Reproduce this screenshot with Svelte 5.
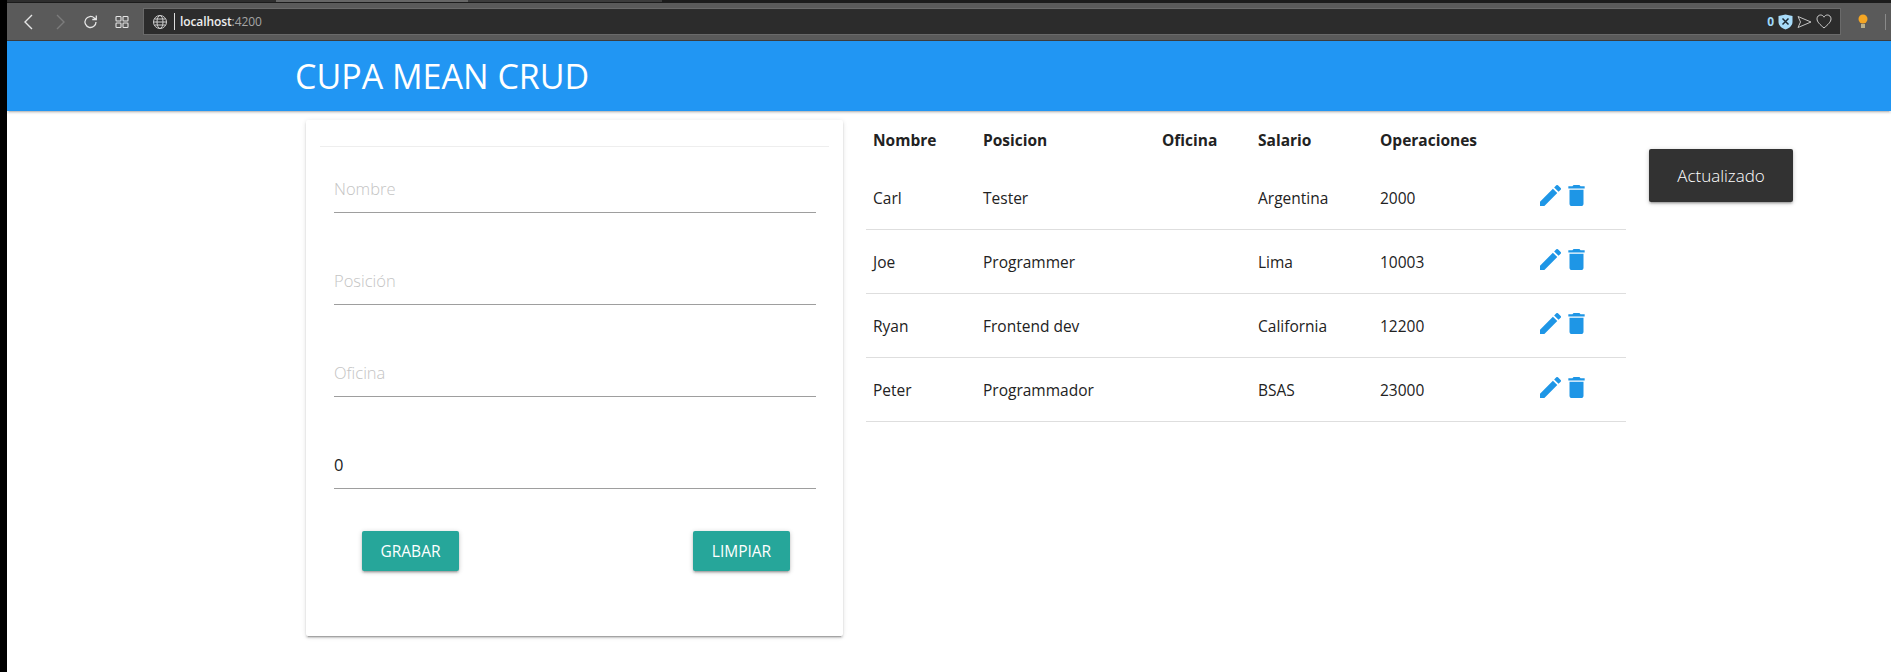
<script>
    let rows = [
        { nombre: "Carl", posicion: "Tester", oficina: "Argentina", salario: "2000" },
        { nombre: "Joe", posicion: "Programmer", oficina: "Lima", salario: "10003" },
        { nombre: "Ryan", posicion: "Frontend dev", oficina: "California", salario: "12200" },
        { nombre: "Peter", posicion: "Programmador", oficina: "BSAS", salario: "23000" }
    ];
    let campos = ["Nombre", "Posición", "Oficina"];
</script>

<div class="shell">
    <div class="strip"></div>
    <div class="window">
        <div class="tabline">
            <div class="seg seg1"></div>
            <div class="seg seg2"></div>
            <div class="seg seg3"></div>
        </div>
        <div class="toolbar">
            <div class="navicons">
                <svg width="16" height="18" viewBox="0 0 16 18"><path d="M11 2 4 9l7 7" fill="none" stroke="#e6e6e6" stroke-width="1.4"/></svg>
                <svg width="16" height="18" viewBox="0 0 16 18"><path d="M5 2l7 7-7 7" fill="none" stroke="#7c7c7c" stroke-width="1.4"/></svg>
                <svg width="16" height="18" viewBox="0 0 16 18"><path d="M13 9a5.5 5.5 0 1 1-1.6-3.9L13 6.5M13.300 2.500v4h-4" fill="none" stroke="#e6e6e6" stroke-width="1.3"/></svg>
                <svg width="16" height="18" viewBox="0 0 16 18"><g fill="none" stroke="#e6e6e6" stroke-width="1.1"><rect x="2" y="3.500" width="5" height="4.500" rx=".8"/><rect x="9" y="3.500" width="5" height="4.500" rx=".8"/><rect x="2" y="10" width="5" height="4.500" rx=".8"/><rect x="9" y="10" width="5" height="4.500" rx=".8"/></g></svg>
            </div>
            <div class="address">
                <svg width="16" height="16" viewBox="0 0 16 16"><g fill="none" stroke="#cfcfcf" stroke-width="1"><circle cx="8" cy="8" r="6.500"/><ellipse cx="8" cy="8" rx="3" ry="6.500"/><path d="M1.500 8h13M2.500 5h11M2.500 11h11"/></g></svg>
                <span class="caret"></span>
                <span class="url">localhost<span class="port">:4200</span></span>
                <div class="addr-right">
                    <span class="count">0</span>
                    <svg width="15" height="16" viewBox="0 0 15 16"><path d="M.5 2 7.500.5 14.500 2v6c0 4-4 6.500-7 7.500-3-1-7-3.500-7-7.500z" fill="#a8dcfa"/><path d="M4.500 4.500l6 6M10.500 4.500l-6 6" stroke="#1d2b36" stroke-width="1.500"/></svg>
                    <svg width="15" height="14" viewBox="0 0 15 14"><path d="M1 1.500 14 7 1 12.500 3.500 7z" fill="none" stroke="#c4c4c4" stroke-width="1"/></svg>
                    <svg width="16" height="15" viewBox="0 0 16 15"><path d="M8 14C4 10.500 1 8 1 4.800 1 2.500 2.800 1 4.600 1 6 1 7.300 1.800 8 3.200 8.700 1.800 10 1 11.400 1 13.200 1 15 2.500 15 4.800 15 8 12 10.500 8 14z" fill="none" stroke="#d0d0d0" stroke-width="1"/></svg>
                </div>
            </div>
            <div class="ext">
                <svg width="10" height="16" viewBox="0 0 10 16"><circle cx="5" cy="5" r="4.500" fill="#f5a623"/><rect x="3" y="10" width="4" height="4" fill="#b9b08c"/></svg>
                <span class="sep"></span>
            </div>
        </div>

        <nav class="navbar">
            <span class="brand">CUPA MEAN CRUD</span>
        </nav>

        <main class="content">
            <section class="card">
                <hr />
                <form class="fields">
                    {#each campos as campo}
                        <input class="field" placeholder={campo} />
                    {/each}
                    <input class="field" value="0" />
                    <div class="actions">
                        <button type="button">GRABAR</button>
                        <button type="button">LIMPIAR</button>
                    </div>
                </form>
            </section>

            <table>
                <colgroup>
                    <col class="c1" /><col class="c2" /><col class="c3" /><col class="c4" /><col class="c5" /><col class="c6" />
                </colgroup>
                <thead>
                    <tr>
                        <th>Nombre</th>
                        <th>Posicion</th>
                        <th>Oficina</th>
                        <th>Salario</th>
                        <th>Operaciones</th>
                        <th></th>
                    </tr>
                </thead>
                <tbody>
                    {#each rows as row}
                        <tr>
                            <td>{row.nombre}</td>
                            <td>{row.posicion}</td>
                            <td></td>
                            <td>{row.oficina}</td>
                            <td>{row.salario}</td>
                            <td class="ops">
                                <svg class="pencil" viewBox="3 3 18 18" width="21" height="21"><path d="M3 17.250V21h3.750L17.810 9.940l-3.750-3.750L3 17.250zM20.710 7.040a1 1 0 0 0 0-1.410l-2.340-2.340a1 1 0 0 0-1.410 0l-1.830 1.830 3.750 3.750 1.830-1.830z"/></svg>
                                <svg class="trash" viewBox="5 3 14 18" width="17" height="21"><path d="M6 19c0 1.100.9 2 2 2h8c1.100 0 2-.9 2-2V7H6v12zM19 4h-3.500l-1-1h-5l-1 1H5v2h14V4z"/></svg>
                            </td>
                        </tr>
                    {/each}
                </tbody>
            </table>
        </main>

        <div class="toast">Actualizado</div>
    </div>
</div>

<style>
    :global(body) {
        margin: 0;
        background: #fff;
    }
    .shell {
        display: flex;
        height: 672px;
        overflow: hidden;
        font-family: "Open Sans", "Noto Sans", sans-serif;
    }
    .strip {
        width: 7px;
        background: #000;
        flex-shrink: 0;
    }
    .window {
        position: relative;
        flex: 1;
        min-width: 0;
    }
    .tabline {
        display: flex;
        height: 3px;
        background: #1c1c1c;
    }
    .seg {
        height: 2px;
    }
    .seg1 {
        width: 269px;
        background: #2e2e2e;
    }
    .seg2 {
        width: 192px;
        background: #666;
    }
    .seg3 {
        width: 194px;
        background: #3c3c3c;
    }
    .toolbar {
        display: flex;
        align-items: center;
        background: #5a5a5a;
        border-bottom: 1px solid #3c3c3c;
        box-sizing: border-box;
        height: 38px;
    }
    .navicons {
        display: flex;
        align-items: center;
        gap: 15px;
        width: 136px;
        padding-left: 14px;
        box-sizing: border-box;
        flex-shrink: 0;
    }
    .address {
        display: flex;
        align-items: center;
        width: 1698px;
        height: 27px;
        box-sizing: border-box;
        background: #2c2c2c;
        border: 1px solid #6a6a6a;
        padding: 0 8px;
        flex-shrink: 0;
    }
    .caret {
        width: 1px;
        height: 17px;
        background: #ddd;
        margin: 0 5px 0 6px;
    }
    .url {
        color: #eee;
        font-size: 12px;
        font-weight: 600;
        letter-spacing: -0.1px;
    }
    .port {
        color: #a5a5a5;
        font-weight: 400;
    }
    .addr-right {
        display: flex;
        align-items: center;
        gap: 4px;
        margin-left: auto;
    }
    .count {
        color: #9fd8f8;
        font-size: 12px;
        font-weight: 700;
    }
    .ext {
        display: flex;
        align-items: center;
        gap: 17px;
        margin-left: 17px;
    }
    .sep {
        width: 1px;
        height: 16px;
        background: #8a8a8a;
    }
    .navbar {
        display: flex;
        align-items: center;
        height: 70px;
        background: #2196f3;
        padding-left: 288px;
        box-shadow: 0 2px 2px rgba(0, 0, 0, 0.14), 0 3px 1px -2px rgba(0, 0, 0, 0.12);
    }
    .brand {
        color: #fff;
        font-size: 34px;
    }
    .content {
        display: flex;
        align-items: flex-start;
        gap: 23px;
        padding: 9px 0 0 299px;
    }
    .card {
        width: 537px;
        height: 516px;
        box-sizing: border-box;
        padding: 26px 14px 0;
        border-radius: 2px;
        background: #fff;
        box-shadow: 0 2px 2px rgba(0, 0, 0, 0.14), 0 3px 1px -2px rgba(0, 0, 0, 0.2), 0 1px 5px rgba(0, 0, 0, 0.12);
    }
    hr {
        margin: 0;
        border: 0;
        border-top: 1px solid #eee;
    }
    .fields {
        display: flex;
        flex-direction: column;
        gap: 46px;
        padding: 20px 13px 0 14px;
    }
    .field {
        height: 46px;
        box-sizing: border-box;
        border: 0;
        border-bottom: 1px solid #9e9e9e;
        outline: 0;
        padding: 0 0 2px;
        font: 400 16.5px "Open Sans", sans-serif;
        color: #222;
        background: transparent;
    }
    .field::placeholder {
        font-weight: 300;
        color: #c4c4c4;
        opacity: 1;
    }
    .actions {
        display: flex;
        justify-content: space-between;
        margin-top: -4px;
        padding: 0 26px 0 28px;
    }
    button {
        width: 97px;
        height: 40px;
        border: 0;
        border-radius: 2px;
        padding: 0;
        background: #26a69a;
        color: #fff;
        font: 400 15.500px "Open Sans", sans-serif;
        box-shadow: 0 2px 2px rgba(0, 0, 0, 0.14), 0 3px 1px -2px rgba(0, 0, 0, 0.12), 0 1px 5px rgba(0, 0, 0, 0.2);
    }
    table {
        width: 760px;
        table-layout: fixed;
        border-collapse: collapse;
        font-size: 15.5px;
        color: #222;
    }
    .c1 { width: 111px; }
    .c2 { width: 179px; }
    .c3 { width: 96px; }
    .c4 { width: 122px; }
    .c5 { width: 160px; }
    .c6 { width: 92px; }
    th {
        height: 40px;
        padding: 0 6px 6px;
        text-align: left;
        font-weight: 700;
    }
    td {
        height: 62px;
        padding: 1px 6px 0;
        border-bottom: 1px solid #dedede;
    }
    th:first-child,
    td:first-child {
        padding-left: 7px;
    }
    .ops {
        white-space: nowrap;
        font-size: 0;
    }
    .ops svg {
        fill: #1e96e6;
        margin-bottom: 5px;
    }
    .pencil {
        margin-right: 7px;
    }
    .toast {
        position: absolute;
        top: 149px;
        left: 1642px;
        width: 144px;
        height: 53px;
        display: flex;
        align-items: center;
        justify-content: center;
        border-radius: 2px;
        background: #323232;
        color: #fff;
        font-size: 17px;
        font-weight: 300;
        box-shadow: 0 2px 2px rgba(0, 0, 0, 0.14), 0 3px 1px -2px rgba(0, 0, 0, 0.12), 0 1px 5px rgba(0, 0, 0, 0.2);
    }
</style>
